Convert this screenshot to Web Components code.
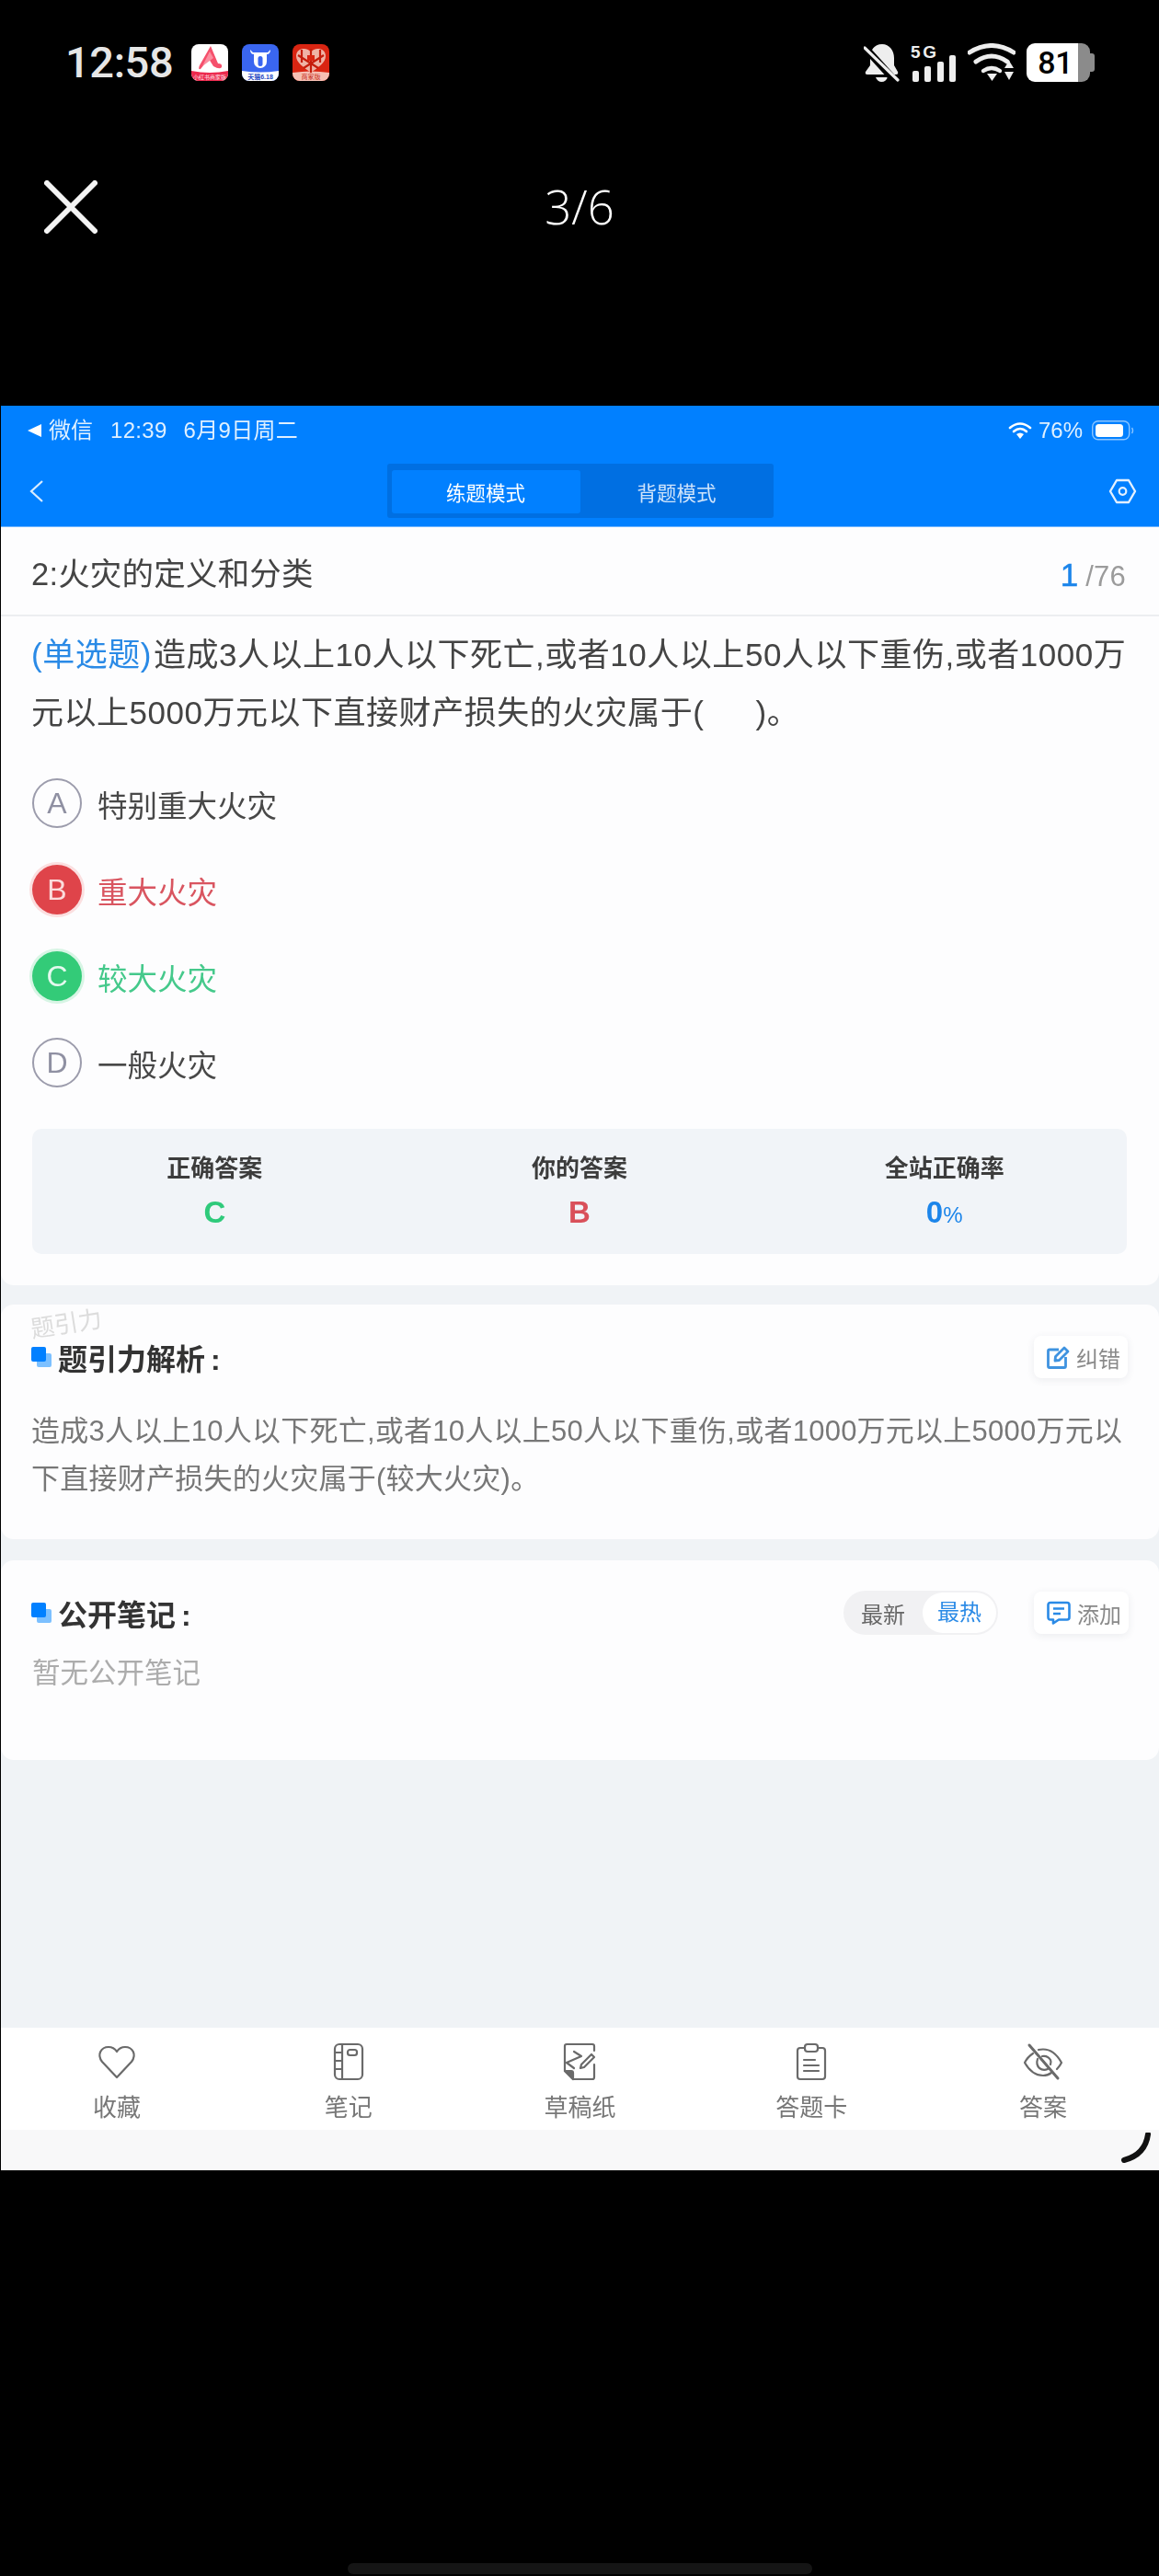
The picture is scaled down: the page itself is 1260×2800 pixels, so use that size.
<!DOCTYPE html>
<html lang="zh">
<head>
<meta charset="utf-8">
<title>题引力</title>
<style>
  html, body { margin: 0; background: #000; }
  body {
    width: 1260px;
    height: 2800px;
    overflow: hidden;
    font-family: "Liberation Sans", "Noto Sans CJK SC", sans-serif;
    display: flex;
    flex-direction: column;
  }
</style>
</head>
<body>
  <phone-status></phone-status>
  <viewer-bar>3/6</viewer-bar>

  <exam-screen>
    <sub-status></sub-status>
    <nav-bar></nav-bar>
    <chapter-row current="1" total="/76">2:火灾的定义和分类</chapter-row>

    <question-card>
      <span slot="kind">(单选题)</span>
      <span slot="stem">造成3人以上10人以下死亡,或者10人以上50人以下重伤,或者1000万元以上5000万元以下直接财产损失的火灾属于(&emsp;&nbsp;&nbsp;)。</span>
      <answer-option letter="A">特别重大火灾</answer-option>
      <answer-option letter="B" state="wrong">重大火灾</answer-option>
      <answer-option letter="C" state="right">较大火灾</answer-option>
      <answer-option letter="D">一般火灾</answer-option>
      <answer-stats slot="stats"></answer-stats>
    </question-card>

    <analysis-card></analysis-card>
    <notes-card></notes-card>
    <tool-bar></tool-bar>
  </exam-screen>

  <home-bar></home-bar>

<script>
class PhoneStatus extends HTMLElement {
  constructor() {
    super();
    this.attachShadow({ mode: "open" }).innerHTML = `
      <style>
        :host { display: flex; flex: none; align-items: flex-start; justify-content: space-between; height: 93px; padding: 47px 70px 0 71px; color: #eee; }
        .left, .right { display: flex; align-items: center; height: 42px; }
        .time { font-size: 47px; line-height: 42px; font-weight: 500; font-family: Roboto, sans-serif; color: #e6e6e6; width: 137px; letter-spacing: -.4px; }
        .apps { display: flex; gap: 15px; }
        svg { display: block; }
        .bell { margin-right: 12px; }
        .signal { margin: -2px 12px 0 0; }
        .wifi { margin-right: 12px; }
        text { font-family: "Liberation Sans", "Noto Sans CJK SC", sans-serif; }
        .battery { position: relative; display: flex; width: 74px; height: 42px; }
        .level { width: 56px; height: 42px; background: #fff; color: #000; border-radius: 9px 0 0 9px; font: 500 34px/42px Roboto, sans-serif; text-align: right; padding-right: 6px; box-sizing: border-box; letter-spacing: -.5px; }
        .rest { width: 13px; height: 42px; background: #8b8b8b; border-radius: 0 9px 9px 0; }
        .nub { width: 5px; height: 20px; margin-top: 11px; background: #8b8b8b; border-radius: 0 3px 3px 0; }
      </style>
      <div class="left">
        <span class="time">12:58</span>
        <div class="apps">
          <svg width="40" height="40" viewBox="0 0 40 40">
            <clipPath id="a1"><rect width="40" height="40" rx="8"/></clipPath>
            <g clip-path="url(#a1)">
              <rect width="40" height="40" fill="#fff"/>
              <path d="M0 29 Q20 33 40 29 V40 H0Z" fill="#ec2a4e"/>
              <path d="M21 2 L29 21 Q34 21 33 25 Q31 28 24 24 L19 16 L10 27 Q7 28 9 23Z" fill="#f5506c"/>
              <path d="M20 8 L12 24 L24 15Z" fill="#fb8ea0"/>
              <text x="20" y="38" font-size="6" fill="#ffe3e8" text-anchor="middle">小红书商家版</text>
            </g>
          </svg>
          <svg width="40" height="40" viewBox="0 0 40 40">
            <clipPath id="a2"><rect width="40" height="40" rx="8"/></clipPath>
            <g clip-path="url(#a2)">
              <rect width="40" height="40" fill="#3a66f0"/>
              <path d="M0 29 Q20 32 40 29 V40 H0Z" fill="#fff"/>
              <path d="M9 6 Q9 11 13 11 H27 Q31 11 31 6 L28 9 H12Z" fill="#fff"/>
              <path d="M13 11 H27 V19 A7 7 0 0 1 13 19Z" fill="#fff"/>
              <rect x="17.500" y="13" width="5" height="11" rx="2.500" fill="#3a66f0"/>
              <text x="20" y="37.500" font-size="7" fill="#2a4bc4" text-anchor="middle" font-weight="700">天猫6.18</text>
            </g>
          </svg>
          <svg width="40" height="40" viewBox="0 0 40 40">
            <clipPath id="a3"><rect width="40" height="40" rx="8"/></clipPath>
            <g clip-path="url(#a3)">
              <rect width="40" height="40" fill="#d92512"/>
              <path d="M0 31 Q20 28 40 31 V40 H0Z" fill="#f6c0b4"/>
              <path d="M20 9 C17 3 4 3 4 13 C4 20 12 25 20 31 C28 25 36 20 36 13 C36 3 23 3 20 9Z" fill="#efb3a6"/>
              <path d="M20 5 V31 M6 12 L28 26 M34 12 L12 26 M10 6 V20 M30 6 V20" stroke="#c51d0c" stroke-width="2.200" fill="none"/>
              <rect x="16" y="12" width="8" height="6" fill="#d92512"/>
              <text x="20" y="38" font-size="7" fill="#c62a18" text-anchor="middle">商家版</text>
            </g>
          </svg>
        </div>
      </div>
      <div class="right">
        <svg class="bell" width="39" height="42" viewBox="0 0 39 42">
          <path d="M20 1 C11 1 7 8 7 16 V24 L2 31 Q1 34 4 34 H35 Q38 34 37 31 L33 24 V16 C33 8 28 1 20 1Z" fill="#eee"/>
          <path d="M13 37 H26 Q24 42 19.500 42 Q15 42 13 37Z" fill="#eee"/>
          <path d="M-2 1 L36 43" stroke="#000" stroke-width="8"/>
          <path d="M1 5 L37 40" stroke="#eee" stroke-width="3.200" stroke-linecap="round"/>
        </svg>
        <svg class="signal" width="50" height="44" viewBox="0 -2 50 44">
          <text x="0" y="15.500" font-size="19" font-weight="700" fill="#eee" textLength="28">5G</text>
          <rect x="2" y="30" width="7" height="12" rx="2" fill="#eee"/>
          <rect x="15" y="25" width="7" height="17" rx="2" fill="#eee"/>
          <rect x="29" y="20" width="7" height="22" rx="2" fill="#eee"/>
          <rect x="42" y="13" width="7" height="29" rx="2" fill="#eee"/>
        </svg>
        <svg class="wifi" width="52" height="42" viewBox="0 0 52 42">
          <g fill="none" stroke="#eee" stroke-width="5" stroke-linecap="round">
            <path d="M2 10 Q26 -5 50 10"/>
            <path d="M9 20 Q26 8 43 20"/>
            <path d="M17 30 Q26 24 35 30" stroke-width="4.500"/>
          </g>
          <path d="M21 33 H32 L26.500 41Z M40 27 L45 19 L50 27Z M40 31 H50 L45 40Z" fill="#eee"/>
        </svg>
        <div class="battery"><div class="level">81</div><div class="rest"></div><div class="nub"></div></div>
      </div>`;
  }
}

class ViewerBar extends HTMLElement {
  constructor() {
    super();
    this.attachShadow({ mode: "open" }).innerHTML = `
      <style>
        :host { display: flex; flex: none; align-items: center; justify-content: center; position: relative; height: 168px; margin-bottom: 133px; color: #fff; font: 300 51px/1 "Open Sans", sans-serif; }
        svg { position: absolute; left: 48px; top: 56px; }
      </style>
      <svg width="58" height="58" viewBox="0 0 58 58"><path d="M3 3 L55 55 M55 3 L3 55" stroke="#f4f4f4" stroke-width="6" stroke-linecap="round"/></svg>
      <slot></slot>`;
  }
}

class ExamScreen extends HTMLElement {
  constructor() {
    super();
    this.attachShadow({ mode: "open" }).innerHTML = `
      <style>
        :host { display: flex; flex: none; flex-direction: column; position: relative; height: 1918px; margin-left: 1px; background: #f0f3f6; overflow: hidden; filter: blur(.45px); }
        svg { position: absolute; right: 8px; bottom: 7px; }
      </style>
      <slot></slot>
      <svg width="34" height="34" viewBox="0 0 34 34"><path d="M30 2 Q27 24 4 30" fill="none" stroke="#111" stroke-width="6" stroke-linecap="round"/></svg>`;
  }
}

class SubStatus extends HTMLElement {
  constructor() {
    super();
    this.attachShadow({ mode: "open" }).innerHTML = `
      <style>
        :host { display: flex; flex: none; align-items: center; justify-content: space-between; height: 54px; padding: 0 27px 0 29px; background: #0180ff; color: rgba(255,255,255,.88); font-size: 24px; line-height: 30px; }
        .left, .right { display: flex; align-items: baseline; }
        .arrow { align-self: center; width: 0; height: 0; border: 7.500px solid transparent; border-left: 0; border-right: 15px solid #fff; margin-right: 8px; }
        .time { margin: 0 18px 0 19px; letter-spacing: .3px; }
        .date { letter-spacing: .3px; }
        .right svg { align-self: center; }
        .pct { margin: 0 10px 0 7px; font-size: 24px; }
        svg { display: block; }
      </style>
      <div class="left"><i class="arrow"></i><span>微信</span><span class="time">12:39</span><span class="date">6月9日周二</span></div>
      <div class="right">
        <svg width="26" height="20" viewBox="0 0 26 20">
          <g fill="none" stroke="#fff" stroke-width="2.600" stroke-linecap="round">
            <path d="M2 7 Q13 -2 24 7"/><path d="M6 11 Q13 5 20 11"/>
          </g>
          <path d="M9 14 Q13 11 17 14 L13 19Z" fill="#fff"/>
        </svg>
        <span class="pct">76%</span>
        <svg width="46" height="22" viewBox="0 0 46 22">
          <rect x=".7" y=".7" width="40" height="20" rx="6" fill="none" stroke="#8cc4ff" stroke-width="1.400"/>
          <rect x="4" y="4" width="30" height="14" rx="3.500" fill="#fff"/>
          <path d="M43.500 8 Q45.500 11 43.500 14" fill="none" stroke="#8cc4ff" stroke-width="1.400"/>
        </svg>
      </div>`;
  }
}

class NavBar extends HTMLElement {
  constructor() {
    super();
    this.attachShadow({ mode: "open" }).innerHTML = `
      <style>
        :host { display: flex; flex: none; align-items: center; justify-content: space-between; height: 77px; padding: 0 24px 0 31px; background: #0180ff; border-bottom: 1px solid #6fb6ff; color: #fff; }
        .seg { display: flex; width: 420px; height: 59px; box-sizing: border-box; padding: 7px 0 5px 5px; margin-left: 8px; background: #006fe2; border-radius: 3px; }
        .seg span { display: flex; align-items: center; justify-content: center; font-size: 21.500px; }
        .on { width: 205px; background: #0180ff; border-radius: 3px; }
        .off { flex: 1; color: #cfe4fb; }
        svg { display: block; }
      </style>
      <svg width="16" height="26" viewBox="0 0 16 26"><path d="M14 2 L2 13 L14 24" fill="none" stroke="#d9ecff" stroke-width="2.200"/></svg>
      <div class="seg"><span class="on">练题模式</span><span class="off">背题模式</span></div>
      <svg width="31" height="28" viewBox="0 0 31 28">
        <path d="M9 2 H22 L29 14 L22 26 H9 L2 14Z" fill="none" stroke="#e3f0ff" stroke-width="2.400" stroke-linejoin="round"/>
        <circle cx="15.500" cy="14" r="3.800" fill="none" stroke="#e3f0ff" stroke-width="2.200"/>
      </svg>`;
  }
}

class ChapterRow extends HTMLElement {
  constructor() {
    super();
    this.attachShadow({ mode: "open" }).innerHTML = `
      <style>
        :host { display: flex; flex: none; align-items: center; justify-content: space-between; height: 87px; padding: 8px 36px 0 33px; background: #fdfdfe; border-bottom: 2px solid #eceef1; color: #444; font-size: 34.500px; line-height: 1; letter-spacing: .2px; }
        .num b { font-weight: 400; font-size: 35px; color: #1c85ea; margin-right: 8px; -webkit-text-stroke: .5px #1c85ea; }
        .num { font-size: 31px; color: #9b9b9b; }
      </style>
      <div><slot></slot></div>
      <div class="num"><b></b><span></span></div>`;
  }
  connectedCallback() {
    this.shadowRoot.querySelector("b").textContent = this.getAttribute("current");
    this.shadowRoot.querySelector(".num span").textContent = this.getAttribute("total");
  }
}

class QuestionCard extends HTMLElement {
  constructor() {
    super();
    this.attachShadow({ mode: "open" }).innerHTML = `
      <style>
        :host { display: block; flex: none; padding: 10px 33px 34px; background: #fdfdfe; border-radius: 0 0 14px 14px; }
        .stem { font-size: 35px; line-height: 63px; color: #444; width: 1200px; letter-spacing: .52px; }
        ::slotted([slot="kind"]) { color: #2a8ae6; margin-right: 2px; }
        .opts { margin-top: 20px; }
      </style>
      <div class="stem"><slot name="kind"></slot><slot name="stem"></slot></div>
      <div class="opts"><slot></slot></div>
      <slot name="stats"></slot>`;
  }
}

class AnswerOption extends HTMLElement {
  constructor() {
    super();
    this.attachShadow({ mode: "open" }).innerHTML = `
      <style>
        :host { display: flex; align-items: center; gap: 17px; height: 94px; padding-left: 1px; font-size: 32.500px; color: #484848; }
        .dot { box-sizing: border-box; width: 54px; height: 54px; border-radius: 50%; border: 2px solid #9c9cac; color: #8f90a2; display: flex; align-items: center; justify-content: center; font-size: 32px; }
        :host([state="wrong"]) { color: #d95560; }
        :host([state="wrong"]) .dot { background: #df444a; border: 0; color: #fbdcdc; box-shadow: 0 0 0 3px #fbdfe0; }
        :host([state="right"]) { color: #45c98b; }
        :host([state="right"]) .dot { background: #33cb78; border: 0; color: #e4f9ee; box-shadow: 0 0 0 3px #d8f5e5; }
      </style>
      <span class="dot"></span>
      <span><slot></slot></span>`;
  }
  connectedCallback() {
    this.shadowRoot.querySelector(".dot").textContent = this.getAttribute("letter");
  }
}

class AnswerStats extends HTMLElement {
  constructor() {
    super();
    this.attachShadow({ mode: "open" }).innerHTML = `
      <style>
        :host { display: grid; grid-template-columns: repeat(3, 1fr); height: 136px; margin: 25px 2px 0 1px; background: #f1f4f8; border-radius: 10px; text-align: center; }
        div { padding-top: 26px; }
        p { margin: 0; font-size: 26px; line-height: 34px; font-weight: 700; color: #3c3c3c; }
        b { display: block; margin-top: 13px; font-size: 33px; line-height: 36px; }
        small { font-size: 24px; font-weight: 400; }
      </style>
      <div><p>正确答案</p><b style="color:#2fca7b">C</b></div>
      <div><p>你的答案</p><b style="color:#d9505a">B</b></div>
      <div><p>全站正确率</p><b style="color:#1c85ea">0<small>%</small></b></div>`;
  }
}

class SectionHead extends HTMLElement {
  constructor() {
    super();
    this.attachShadow({ mode: "open" }).innerHTML = `
      <style>
        :host { display: flex; align-items: center; justify-content: space-between; }
        .title { display: flex; align-items: center; gap: 7px; font-size: 32px; font-weight: 700; color: #333; }
        .mark { position: relative; width: 22px; height: 22px; }
        .mark::before { content: ""; position: absolute; left: 6px; top: 7px; width: 16px; height: 15px; background: #7cc0ff; border-radius: 2px; }
        .mark::after { content: ""; position: absolute; left: 0; top: 0; width: 16px; height: 16px; background: #0180ff; border-radius: 2px; }
        .tools { display: flex; align-items: center; gap: 39px; }
      </style>
      <div class="title"><i class="mark"></i><span><slot></slot></span></div>
      <div class="tools"><slot name="tools"></slot></div>`;
  }
}

class ChipButton extends HTMLElement {
  constructor() {
    super();
    this.attachShadow({ mode: "open" }).innerHTML = `
      <style>
        :host { display: flex; align-items: center; gap: 7px; box-sizing: border-box; height: 46px; padding: 0 8px 0 14px; background: #fff; border-radius: 8px; box-shadow: 0 2px 8px rgba(60,70,90,.09); font-size: 24px; color: #8a8a8a; }
        ::slotted(svg) { display: block; }
      </style>
      <slot name="icon"></slot><slot></slot>`;
  }
}

class AnalysisCard extends HTMLElement {
  constructor() {
    super();
    this.attachShadow({ mode: "open" }).innerHTML = `
      <style>
        :host { display: block; flex: none; position: relative; height: 255px; box-sizing: border-box; margin-top: 21px; padding: 34px 34px 0 33px; background: #fdfdfe; border-radius: 14px; }
        .mark { position: absolute; left: 35px; top: 6px; font-size: 26px; color: #dcdcdc; transform: rotate(-9deg); transform-origin: left bottom; }
        p { margin: 32px 0 0; font-size: 31px; line-height: 52px; color: #777; letter-spacing: .25px; }
      </style>
      <span class="mark">题引力</span>
      <section-head>题引力解析<span style="margin-left:6px">:</span>
        <chip-button slot="tools">
          <svg slot="icon" width="25" height="25" viewBox="0 0 25 25" fill="none" stroke="#3f93e0" stroke-width="2.800">
            <path d="M13 4 H3 Q1.500 4 1.500 5.500 V22 Q1.500 23.500 3 23.500 H19 Q20.500 23.500 20.500 22 V12"/>
            <path d="M9 16 L9.500 11.500 L19 2 L23 6 L13.500 15.500Z" stroke-linejoin="round"/>
          </svg>纠错
        </chip-button>
      </section-head>
      <p>造成3人以上10人以下死亡,或者10人以上50人以下重伤,或者1000万元以上5000万元以下直接财产损失的火灾属于(较大火灾)。</p>`;
  }
}

class NotesCard extends HTMLElement {
  constructor() {
    super();
    this.attachShadow({ mode: "open" }).innerHTML = `
      <style>
        :host { display: block; flex: none; height: 217px; box-sizing: border-box; margin-top: 23px; padding: 33px 33px 0; background: #fdfdfe; border-radius: 14px; }
        .sort { display: flex; align-items: center; width: 168px; height: 48px; box-sizing: border-box; padding: 0 2px 0 19px; background: #f1f1f3; border-radius: 24px; font-size: 24px; color: #666; }
        .hot { margin-left: auto; width: 80px; height: 44px; line-height: 44px; text-align: center; background: #fff; border-radius: 22px; color: #2a8ae6; }
        p { margin: 16px 0 0; padding-left: 1px; font-size: 30.500px; line-height: 50px; color: #acacac; }
      </style>
      <section-head>公开笔记<span style="margin-left:6px">:</span>
        <div class="sort" slot="tools"><span>最新</span><span class="hot">最热</span></div>
        <chip-button slot="tools">
          <svg slot="icon" width="26" height="26" viewBox="0 0 26 26" fill="none" stroke="#2a8ae6" stroke-width="2.600">
            <path d="M4 2 H22 Q24.500 2 24.500 4.500 V18 Q24.500 20.500 22 20.500 H13 L7 24.500 V20.500 H4 Q1.500 20.500 1.500 18 V4.500 Q1.500 2 4 2Z" stroke-linejoin="round"/>
            <path d="M7 8.500 H19 M7 14 H15"/>
          </svg>添加
        </chip-button>
      </section-head>
      <p>暂无公开笔记</p>`;
  }
}

class ToolItem extends HTMLElement {
  constructor() {
    super();
    this.attachShadow({ mode: "open" }).innerHTML = `
      <style>
        :host { display: flex; flex-direction: column; align-items: center; gap: 11px; padding-top: 16px; font-size: 26px; line-height: 36px; color: #777; }
        ::slotted(svg) { display: block; }
      </style>
      <slot name="icon"></slot><slot></slot>`;
  }
}

class ToolBar extends HTMLElement {
  constructor() {
    super();
    const stroke = 'fill="none" stroke="#6a6a6a" stroke-width="2.200" stroke-linecap="round" stroke-linejoin="round"';
    this.attachShadow({ mode: "open" }).innerHTML = `
      <style>
        :host { display: block; flex: none; margin-top: auto; background: #f8f8f9; padding-bottom: 44px; }
        .row { display: grid; grid-template-columns: repeat(5, 1fr); height: 111px; background: #fff; }
      </style>
      <div class="row">
        <tool-item>
          <svg slot="icon" width="44" height="42" viewBox="0 0 44 42" ${stroke}>
            <path d="M22 38 L6 21 C0 13 5 5 13 5 C17 5 20 7 22 10 C24 7 27 5 31 5 C39 5 44 13 38 21Z"/>
          </svg>收藏
        </tool-item>
        <tool-item>
          <svg slot="icon" width="44" height="42" viewBox="0 0 44 42" ${stroke}>
            <rect x="7" y="2" width="30" height="38" rx="5"/>
            <path d="M15 2 V40 M7 11 H15 M7 20 H15 M7 29 H15"/>
            <rect x="21" y="8" width="10" height="6" rx="2.500"/>
          </svg>笔记
        </tool-item>
        <tool-item>
          <svg slot="icon" width="44" height="42" viewBox="0 0 44 42" ${stroke}>
            <path d="M15 40 H36 Q38 40 38 38 V24 M38 9 V4 Q38 2 36 2 H8 Q6 2 6 4 V31 L15 40"/>
            <path d="M6 31 L15 40 V33 Q15 31 13 31Z" fill="#6a6a6a"/>
            <path d="M16 10 L24 15 L8 22 L16 28"/>
            <path d="M23 28 L24 24 L35 13 L38 16 L27 27Z"/>
          </svg>草稿纸
        </tool-item>
        <tool-item>
          <svg slot="icon" width="44" height="42" viewBox="0 0 44 42" ${stroke}>
            <path d="M14 6 H10 Q7 6 7 9 V37 Q7 40 10 40 H34 Q37 40 37 37 V9 Q37 6 34 6 H30"/>
            <rect x="15" y="2" width="14" height="8" rx="3"/>
            <path d="M14 19 H26 M14 25 H30 M14 31 H30"/>
          </svg>答题卡
        </tool-item>
        <tool-item>
          <svg slot="icon" width="44" height="42" viewBox="0 0 44 42" ${stroke}>
            <path d="M11 12 Q5 16 2 22 Q10 36 22 36 Q27 36 31 33"/>
            <path d="M17 8 Q19 7.500 22 7.500 Q34 7.500 42 22 Q40 26 37 29"/>
            <path d="M16 18 Q14 24 18 28 Q22 31 27 29 M21 15 Q27 14 30 19 Q31 21 30 24"/>
            <path d="M7 3 L38 39" stroke-width="3"/>
          </svg>答案
        </tool-item>
      </div>`;
  }
}

class HomeBar extends HTMLElement {
  constructor() {
    super();
    this.attachShadow({ mode: "open" }).innerHTML = `
      <style>
        :host { display: block; flex: none; width: 505px; height: 12px; margin: 427px 0 0 378px; background: #151515; border-radius: 6px; }
      </style>`;
  }
}

customElements.define("phone-status", PhoneStatus);
customElements.define("viewer-bar", ViewerBar);
customElements.define("exam-screen", ExamScreen);
customElements.define("sub-status", SubStatus);
customElements.define("nav-bar", NavBar);
customElements.define("chapter-row", ChapterRow);
customElements.define("question-card", QuestionCard);
customElements.define("answer-option", AnswerOption);
customElements.define("answer-stats", AnswerStats);
customElements.define("section-head", SectionHead);
customElements.define("chip-button", ChipButton);
customElements.define("analysis-card", AnalysisCard);
customElements.define("notes-card", NotesCard);
customElements.define("tool-item", ToolItem);
customElements.define("tool-bar", ToolBar);
customElements.define("home-bar", HomeBar);
</script>
</body>
</html>
